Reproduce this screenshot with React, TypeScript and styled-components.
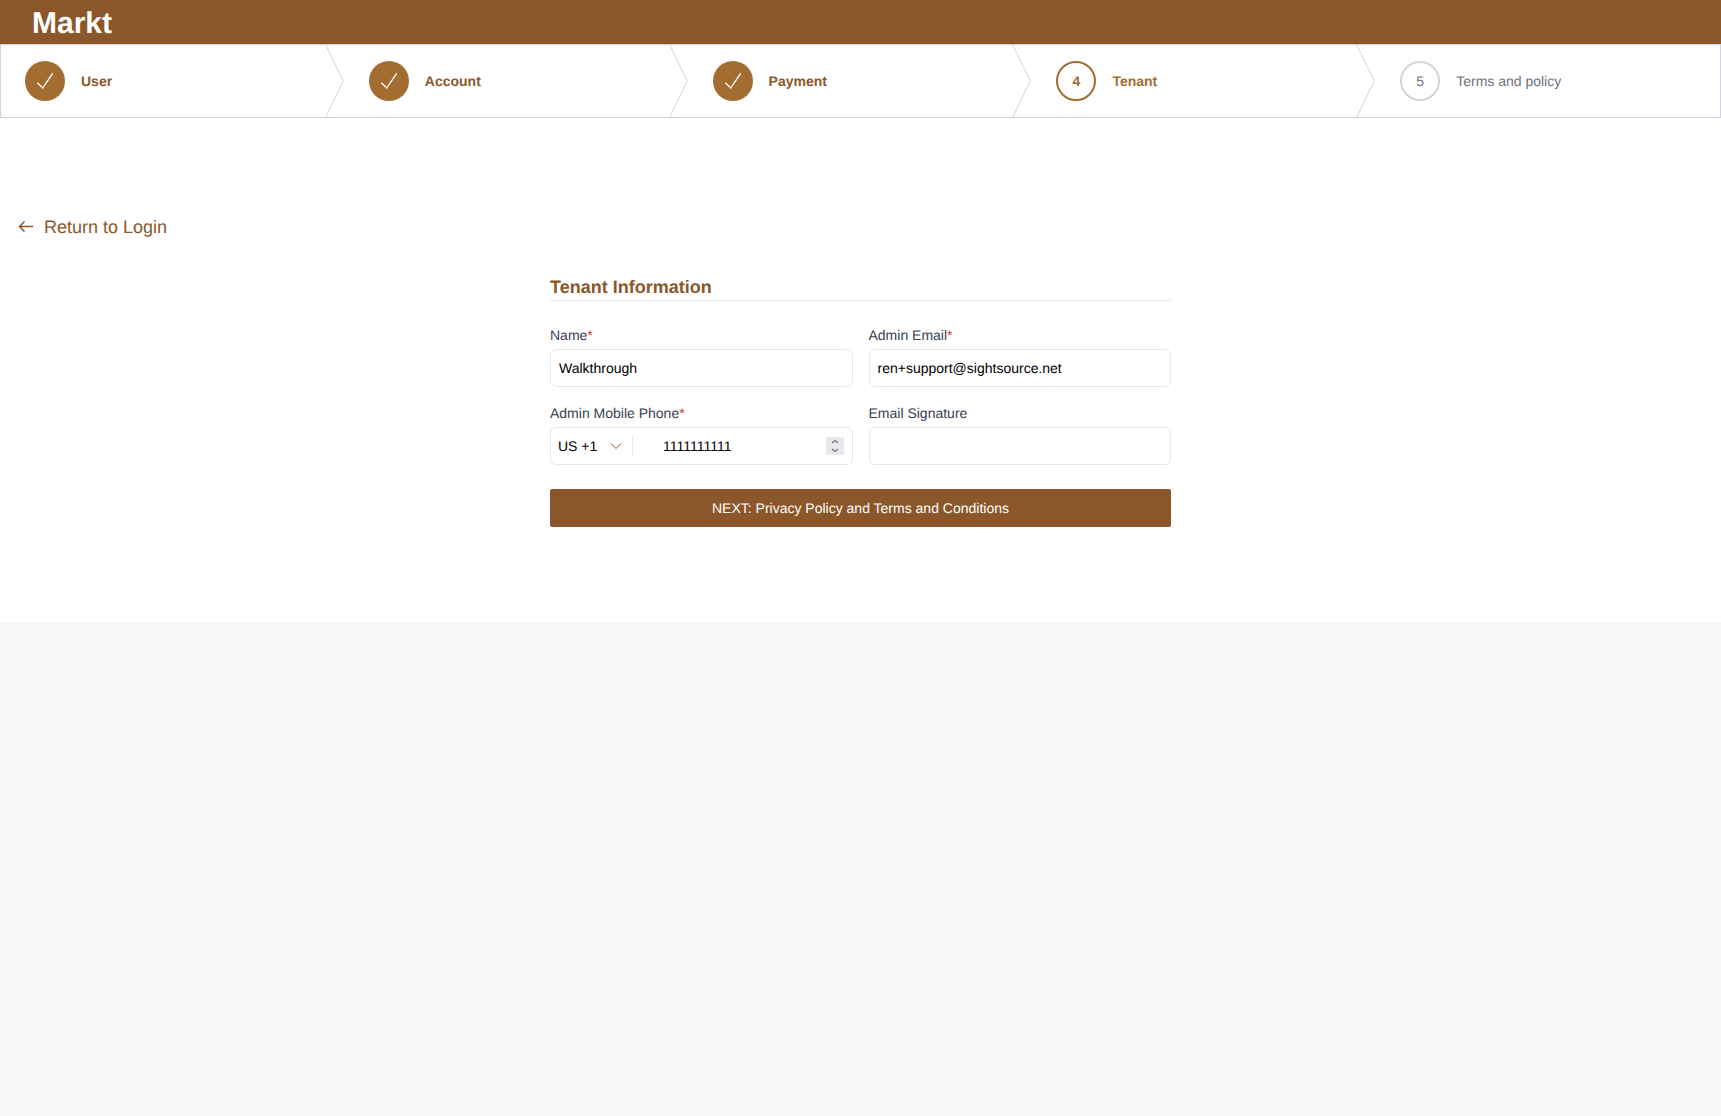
import React from 'react';
import styled, { createGlobalStyle } from 'styled-components';
import { ChevronDown } from 'lucide-react';

const GlobalStyle = createGlobalStyle`
  * { box-sizing: border-box; }
  html, body { margin: 0; padding: 0; }
  body {
    background: #f6f8f7;
    font-family: "Liberation Sans", Arial, sans-serif;
    text-rendering: geometricPrecision;
  }
`;

const Page = styled.div`
  min-height: 100vh;
`;

const Header = styled.header`
  height: 44px;
  padding-left: 32px;
  background: #8b572a;
  color: #fff;
  font-size: 30px;
  font-weight: 700;
  line-height: 47px;
  overflow: hidden;
`;

const Stepper = styled.ol`
  display: flex;
  height: 74px;
  margin: 0;
  padding: 0;
  list-style: none;
  background: #fff;
  border: 1px solid #d1d5db;
`;

const Step = styled.li`
  position: relative;
  flex: 1;
  display: flex;
  align-items: center;
  gap: 16px;
  padding-left: 24px;
`;

const Chevron = styled.svg`
  position: absolute;
  top: 0;
  right: 0;
  width: 20px;
  height: 100%;
  color: #d1d5db;
`;

const Circle = styled.span<{ $state: 'done' | 'active' | 'todo' }>`
  flex: none;
  display: flex;
  align-items: center;
  justify-content: center;
  width: 40px;
  height: 40px;
  border-radius: 50%;
  font-size: 14px;
  font-weight: ${p => (p.$state === 'active' ? 700 : 400)};
  color: ${p => (p.$state === 'done' ? '#fff' : p.$state === 'active' ? '#a36d32' : '#6b7280')};
  background: ${p => (p.$state === 'done' ? '#a36d32' : 'transparent')};
  border: ${p => (p.$state === 'active' ? '2px solid #a36d32' : p.$state === 'todo' ? '2px solid #d1d5db' : 'none')};
`;

const StepName = styled.span<{ $state: 'done' | 'active' | 'todo' }>`
  font-size: 14px;
  font-weight: ${p => (p.$state === 'todo' ? 400 : 700)};
  color: ${p => (p.$state === 'done' ? '#8b572a' : p.$state === 'active' ? '#a36d32' : '#6b7280')};
`;

const Main = styled.main`
  height: 505px;
  padding: 95px 18px 0;
  background: #fff;
`;

const BackLink = styled.a`
  display: flex;
  align-items: center;
  gap: 10px;
  height: 28px;
  color: #8b572a;
  font-size: 18px;
  line-height: 28px;
  text-decoration: none;
`;

const Form = styled.form`
  width: 621px;
  margin: 32px auto 0;
`;

const Title = styled.h2`
  height: 28px;
  margin: 0 0 24px;
  color: #8b572a;
  font-size: 18px;
  font-weight: 700;
  line-height: 28px;
  border-bottom: 1px solid #e5e7eb;
`;

const Fields = styled.div`
  display: grid;
  grid-template-columns: minmax(0, 1fr) minmax(0, 1fr);
  gap: 16px;
`;

const Label = styled.label`
  display: block;
  margin-bottom: 4px;
  color: #374151;
  font-size: 14px;
  line-height: 20px;
`;

const Required = styled.span`
  color: #dc2626;
`;

const Input = styled.input`
  display: block;
  width: 100%;
  height: 38px;
  padding: 0 8px;
  color: #000;
  font: 14px "Liberation Sans", Arial, sans-serif;
  text-rendering: geometricPrecision;
  background: #fff;
  border: 1px solid #e5e7eb;
  border-radius: 6px;
  outline: none;
`;

const PhoneBox = styled.div`
  display: flex;
  align-items: center;
  height: 38px;
  padding: 0 8px 0 7px;
  background: #fff;
  border: 1px solid #e5e7eb;
  border-radius: 6px;
`;

const Country = styled.span`
  flex: none;
  display: flex;
  align-items: center;
  justify-content: space-between;
  width: 75px;
  height: 20px;
  padding-right: 6px;
  color: #000;
  font-size: 14px;
  border-right: 1px solid #e5e7eb;
`;

const PhoneInput = styled.input`
  flex: 1;
  min-width: 0;
  padding: 0 0 0 30px;
  color: #000;
  font: 14px "Liberation Sans", Arial, sans-serif;
  text-rendering: geometricPrecision;
  border: 0;
  outline: none;
`;

const Spinner = styled.span`
  flex: none;
  display: flex;
  width: 18px;
  height: 18px;
  color: #6b7280;
  background: #e9e9ed;
`;

const SubmitButton = styled.button`
  display: block;
  width: 100%;
  height: 38px;
  margin-top: 24px;
  color: #fff;
  font: 14px "Liberation Sans", Arial, sans-serif;
  text-rendering: geometricPrecision;
  background: #8b572a;
  border: 0;
  border-radius: 2px;
`;

type StepState = 'done' | 'active' | 'todo';

const steps: { name: string; state: StepState }[] = [
  { name: 'User', state: 'done' },
  { name: 'Account', state: 'done' },
  { name: 'Payment', state: 'done' },
  { name: 'Tenant', state: 'active' },
  { name: 'Terms and policy', state: 'todo' },
];

const CheckMark = () => (
  <svg width="40" height="40" viewBox="0 0 40 40" fill="none">
    <path d="M12.3 21.7L17.7 27L27.7 12.3" stroke="currentColor" strokeWidth="1.3" />
  </svg>
);

const BackArrow = () => (
  <svg width="16" height="14" viewBox="0 0 16 14" fill="none">
    <path d="M15 6.5H1.5M6.5 1.5L1.5 6.5L6.5 11.5" stroke="currentColor" strokeWidth="1.5" />
  </svg>
);

const SpinArrows = () => (
  <svg width="18" height="18" viewBox="0 0 18 18" fill="none">
    <path d="M6 6L9 3.5L12 6M6 12L9 14.5L12 12" stroke="currentColor" strokeWidth="1.2" />
  </svg>
);

const App: React.FC = () => (
  <Page>
    <GlobalStyle />
    <Header>Markt</Header>
    <Stepper>
      {steps.map((step, i) => (
        <Step key={step.name}>
          <Circle $state={step.state}>{step.state === 'done' ? <CheckMark /> : i + 1}</Circle>
          <StepName $state={step.state}>{step.name}</StepName>
          {i < steps.length - 1 && (
            <Chevron viewBox="0 0 22 80" fill="none" preserveAspectRatio="none">
              <path d="M0 -2L20 40L0 82" stroke="currentColor" vectorEffect="non-scaling-stroke" />
            </Chevron>
          )}
        </Step>
      ))}
    </Stepper>
    <Main>
      <BackLink href="#">
        <BackArrow />
        Return to Login
      </BackLink>
      <Form>
        <Title>Tenant Information</Title>
        <Fields>
          <div>
            <Label>Name<Required>*</Required></Label>
            <Input defaultValue="Walkthrough" />
          </div>
          <div>
            <Label>Admin Email<Required>*</Required></Label>
            <Input defaultValue="ren+support@sightsource.net" />
          </div>
          <div>
            <Label>Admin Mobile Phone<Required>*</Required></Label>
            <PhoneBox>
              <Country>
                US +1
                <ChevronDown size={20} strokeWidth={1.2} color="#8b572a" />
              </Country>
              <PhoneInput defaultValue="1111111111" />
              <Spinner>
                <SpinArrows />
              </Spinner>
            </PhoneBox>
          </div>
          <div>
            <Label>Email Signature</Label>
            <Input />
          </div>
        </Fields>
        <SubmitButton type="button">NEXT: Privacy Policy and Terms and Conditions</SubmitButton>
      </Form>
    </Main>
  </Page>
);

export default App;
